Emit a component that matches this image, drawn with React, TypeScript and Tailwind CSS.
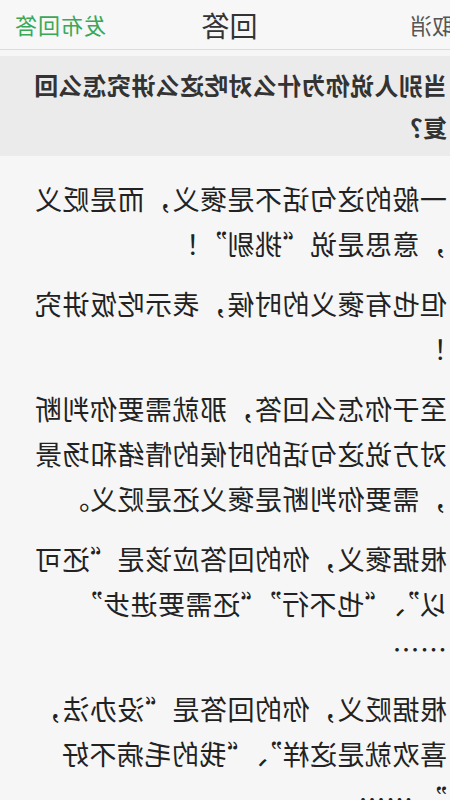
const font = { fontFamily: '"Noto Sans CJK SC", "Noto Sans", sans-serif' }

const paragraphs: string[][] = [
  ['一般的这句话不是褒义，而是贬义', '，意思是说“挑剔”！'],
  ['但也有褒义的时候，表示吃饭讲究', '！'],
  ['至于你怎么回答，那就需要你判断', '对方说这句话的时候的情绪和场景', '，需要你判断是褒义还是贬义。'],
  ['根据褒义，你的回答应该是“还可', '以”、“也不行”“还需要进步”', '……'],
  ['根据贬义，你的回答是“没办法，', '喜欢就是这样”、“我的毛病不好', '” ……'],
]

export default function App() {
  return (
    <div
      className="h-[800px] w-[450px] -scale-x-100 overflow-hidden bg-[#f6f6f6] text-[#222]"
      style={font}
    >
      <header className="relative flex h-[50px] items-center justify-between border-b border-[#dcdcdc] bg-[#f7f7f7]">
        <span className="ml-[-4px] text-[22px] text-[#555]">取消</span>
        <span className="absolute left-1/2 -translate-x-[58%] text-[28px] text-[#333]">回答</span>
        <span className="mr-[14px] text-[22px] tracking-[1px] text-[#3aa857]">发布回答</span>
      </header>

      <div className="mt-[6px] bg-[#ebebeb] pb-[8px] pl-[3px] pt-[8px] text-[24px] font-bold leading-[42px] tracking-[0.3px] text-[#333]">
        当别人说你为什么对吃这么讲究怎么回
        <br />
        复？
      </div>

      <main className="flex flex-col gap-[15px] pl-[3px] pt-[20px] text-[27px] leading-[45px] tracking-[0.5px]">
        {paragraphs.map((lines, i) => (
          <p key={i}>
            {lines.map((line, j) => (
              <span key={j} className="block whitespace-nowrap">
                {line}
              </span>
            ))}
          </p>
        ))}
      </main>
    </div>
  )
}
